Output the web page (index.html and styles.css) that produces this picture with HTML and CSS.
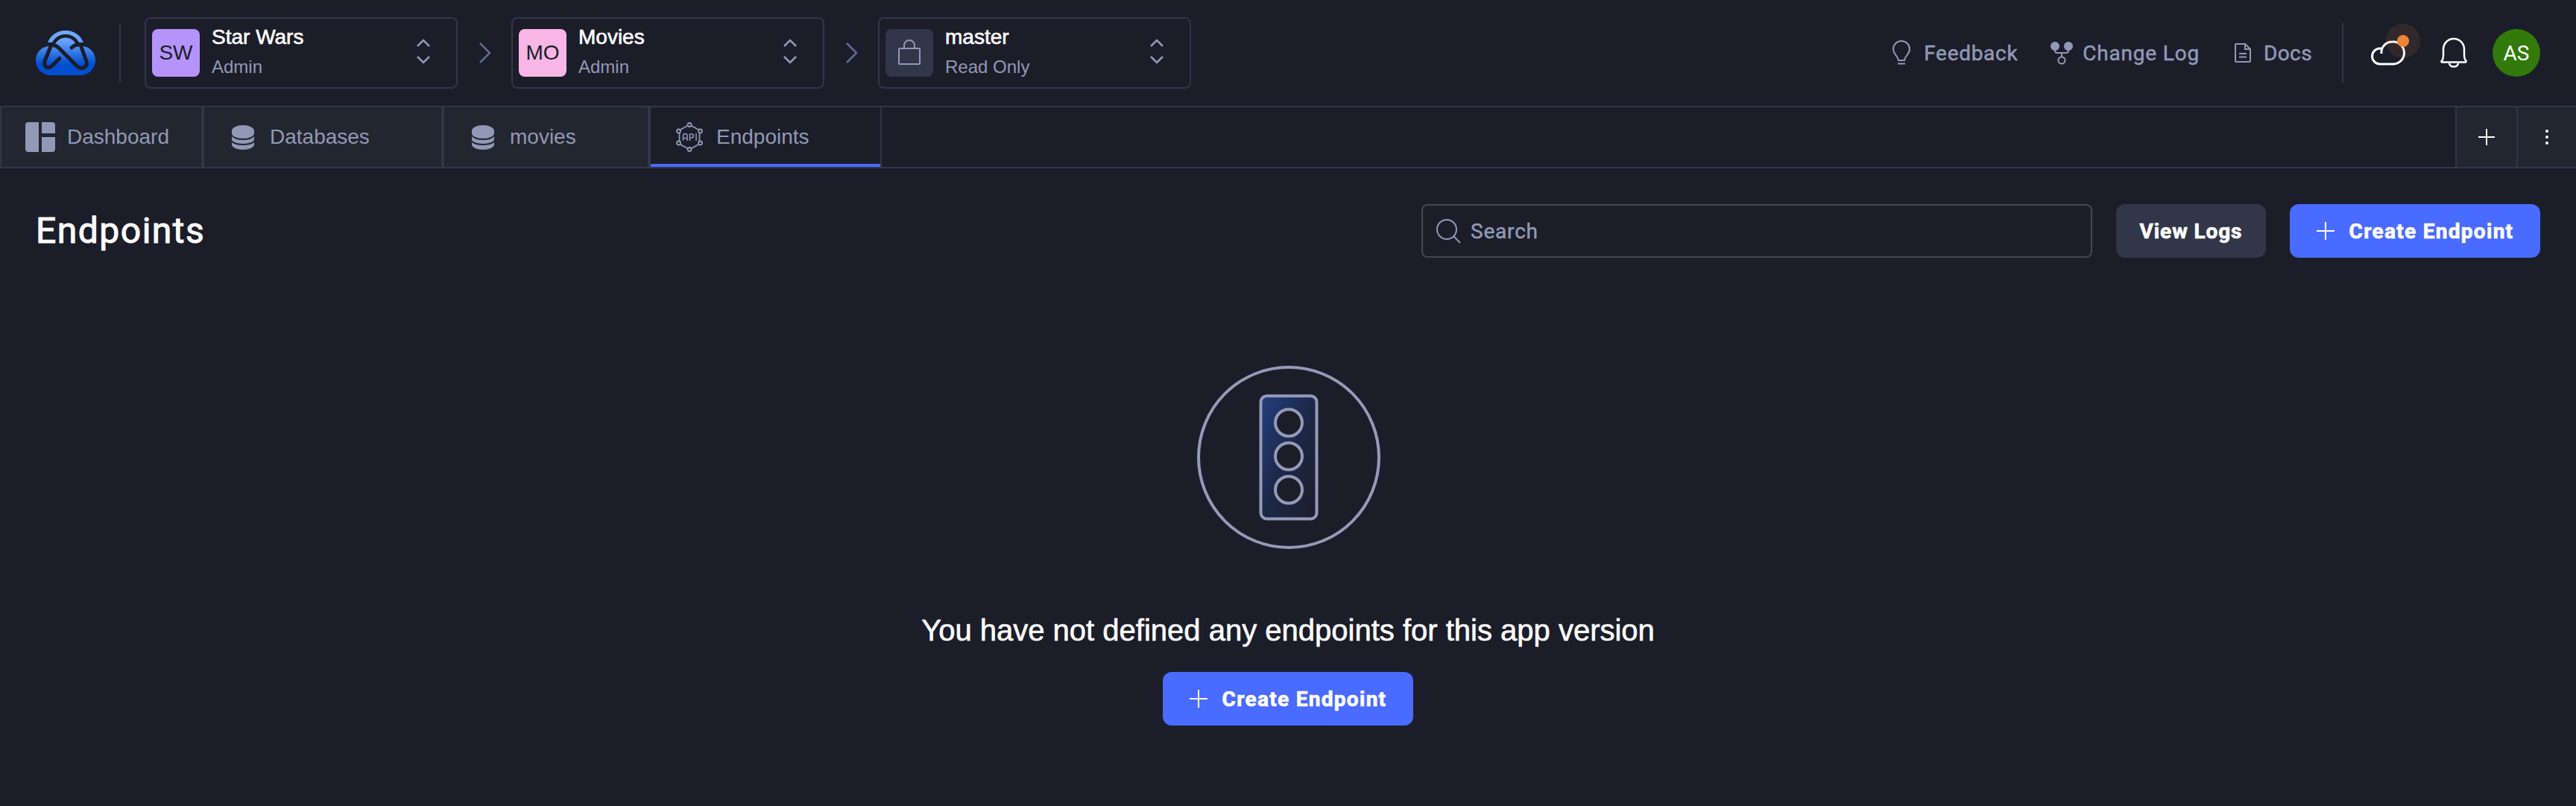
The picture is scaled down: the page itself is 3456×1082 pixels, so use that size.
FILE: index.html
```html
<!DOCTYPE html>
<html lang="en">
<head>
<meta charset="utf-8">
<title>Endpoints</title>
<link rel="stylesheet" href="styles.css">
</head>
<body>
<header class="topbar">
  <svg class="logo" viewBox="0 0 80 60">
    <defs><linearGradient id="cloud" gradientUnits="userSpaceOnUse" x1="0" y1="0" x2="0" y2="60"><stop offset="0" stop-color="#76abff"/><stop offset=".25" stop-color="#659ffb"/><stop offset=".75" stop-color="#014fd0"/><stop offset="1" stop-color="#014fd0"/></linearGradient></defs>
    <path fill="url(#cloud)" d="M16 16C20 6 29 0 40 0s20 6 24 16h-6C54 9 48 5 40 5s-14 4-18 11zM26 18C29 13 34 9.500 40 9.500S51 13 54 18L63 21C73 22 80 30 80 40 80 51 71 60 60 60H20C9 60 0 51 0 40 0 30 7 22 17 21Z"/>
    <path class="logo-cut" d="M32 37.500 21 48c-5 4-11 0-9-7L20.500 20M22 20c3-1 5 0 8 2.500l25 25c6 6 15 2 13-6L60 19M48 23q4-4 9-4"/>
  </svg>
  <span class="rule rule-left"></span>
  <div class="select">
    <span class="tile tile-purple">SW</span>
    <span class="select-text"><b>Star Wars</b><small>Admin</small></span>
    <svg class="updown" viewBox="0 0 20 34"><path d="m2 10 8-8 8 8M2 24l8 8 8-8"/></svg>
  </div>
  <svg class="crumb" viewBox="0 0 18 30"><path d="m2 2 13 13L2 28"/></svg>
  <div class="select">
    <span class="tile tile-pink">MO</span>
    <span class="select-text"><b>Movies</b><small>Admin</small></span>
    <svg class="updown" viewBox="0 0 20 34"><path d="m2 10 8-8 8 8M2 24l8 8 8-8"/></svg>
  </div>
  <svg class="crumb" viewBox="0 0 18 30"><path d="m2 2 13 13L2 28"/></svg>
  <div class="select">
    <span class="tile tile-lock"><svg class="lock" viewBox="0 0 32 36"><rect x="2" y="13" width="28" height="21" rx="1"/><path d="M9 13V9a7 7 0 0 1 14 0v4"/></svg></span>
    <span class="select-text"><b>master</b><small>Read Only</small></span>
    <svg class="updown" viewBox="0 0 20 34"><path d="m2 10 8-8 8 8M2 24l8 8 8-8"/></svg>
  </div>
  <nav class="links">
    <a class="link link-feedback"><svg class="i-bulb" viewBox="0 0 24 32"><path d="M8 26c-1-7-7-8-7-15a11 11 0 0 1 22 0c0 7-6 8-7 15zM7 30.500h10"/></svg>Feedback</a>
    <a class="link link-changelog"><svg class="i-fork" viewBox="0 0 30 31"><circle class="dot" cx="6" cy="6" r="6"/><circle class="dot" cx="24" cy="6" r="6"/><path d="M6 10v2q0 3 3 3h12q3 0 3-3v-2M15 15v5"/><circle cx="15" cy="25" r="4.600"/></svg>Change Log</a>
    <a class="link link-docs"><svg class="i-doc" viewBox="0 0 22 26"><path d="M2 1h12l7 7v16q0 1-1 1H2q-1 0-1-1V2q0-1 1-1zM14 1v7h7M6 14h10M6 18.500h10"/></svg>Docs</a>
  </nav>
  <span class="rule rule-right"></span>
  <div class="deploy"><svg class="i-cloud" viewBox="0 0 46 34"><path d="M14 18V14C16 6 22 2 29 2a15 15 0 0 1 1 30H12A10.500 10.500 0 0 1 12 11Q14 11 15 12"/></svg><span class="halo"></span></div>
  <svg class="i-bell" viewBox="0 0 36 40"><path d="M2 32.500q-1-1 0-2 2-2 2-8V15a14 14 0 0 1 28 0v7q0 6 2 8 1 1 0 2.500zM12 34a6 4.500 0 0 0 12 0"/></svg>
  <span class="user">AS</span>
</header>
<nav class="tabs">
  <div class="tab tab-dashboard"><svg class="i-dash" viewBox="0 0 40 40"><path d="M4 0h14v40H4q-4 0-4-4V4q0-4 4-4zM22 0h14q4 0 4 4v11H22zM22 20h18v16q0 4-4 4H22z"/></svg>Dashboard</div>
  <div class="tab tab-databases"><svg class="i-db" viewBox="0 0 30 33"><path d="M0 8a15 8 0 0 1 30 0v3a15 7 0 0 1-30 0zM0 15q4 5 15 5t15-5v4a15 6 0 0 1-30 0zM0 23q4 4 15 4t15-4v3a15 7 0 0 1-30 0z"/></svg>Databases</div>
  <div class="tab tab-movies"><svg class="i-db" viewBox="0 0 30 33"><path d="M0 8a15 8 0 0 1 30 0v3a15 7 0 0 1-30 0zM0 15q4 5 15 5t15-5v4a15 6 0 0 1-30 0zM0 23q4 4 15 4t15-4v3a15 7 0 0 1-30 0z"/></svg>movies</div>
  <div class="tab tab-active"><svg class="i-api" viewBox="0 0 36 40"><path d="m15 5-9 5M21 5l9 5M4.500 15v10M31.500 15v10M6 30l9 5M30 30l-9 5"/><circle cx="18" cy="3.500" r="2.500"/><circle cx="3.500" cy="12" r="2.500"/><circle cx="32.500" cy="12" r="2.500"/><circle cx="3.500" cy="28" r="2.500"/><circle cx="32.500" cy="28" r="2.500"/><circle cx="18" cy="36.500" r="2.500"/><path class="api-mark" d="M9.500 25v-6.500q0-3 2.750-3t2.750 3V25M9.500 21.500H15M18.500 25v-9h2.500q2.500 0 2.500 2.500T21 21h-2.500M27 15v10"/></svg>Endpoints</div>
  <div class="tab-tool tool-add"><svg class="i-add" viewBox="0 0 22 22"><path d="M11 0v22M0 11h22"/></svg></div>
  <div class="tab-tool tool-more"><svg class="i-more" viewBox="0 0 4 20"><circle cx="2" cy="2" r="2"/><circle cx="2" cy="10" r="2"/><circle cx="2" cy="18" r="2"/></svg></div>
</nav>
<main>
  <div class="page-head">
    <h1>Endpoints</h1>
    <label class="search"><svg class="i-search" viewBox="0 0 34 34"><circle cx="15" cy="15" r="13"/><path d="m24 24 9 9"/></svg>Search</label>
    <button class="btn btn-logs">View Logs</button>
    <button class="btn btn-create"><svg class="i-plus" viewBox="0 0 24 24"><path d="M12 0v24M0 12h24"/></svg>Create Endpoint</button>
  </div>
  <section class="empty">
    <svg class="signal" viewBox="0 0 246 246">
      <defs><linearGradient id="lamp" x1="0" y1="0" x2="1" y2="1"><stop offset="0" stop-color="#223f80"/><stop offset=".5" stop-color="#1d2847"/><stop offset="1" stop-color="#1b1d28"/></linearGradient></defs>
      <circle cx="123" cy="123" r="121"/>
      <rect x="85.500" y="40.500" width="75" height="165" rx="8" fill="url(#lamp)"/>
      <circle cx="123" cy="76.500" r="18"/><circle cx="123" cy="121.500" r="18"/><circle cx="123" cy="166.500" r="18"/>
    </svg>
    <p class="message">You have not defined any endpoints for this app version</p>
    <button class="btn btn-create"><svg class="i-plus" viewBox="0 0 24 24"><path d="M12 0v24M0 12h24"/></svg>Create Endpoint</button>
  </section>
</main>
</body>
</html>
```
FILE: styles.css
```css
* { box-sizing: border-box; }
body { margin: 0; background: #1b1d29; color: #fff; font: 28px "Liberation Sans", sans-serif; height: 1082px; overflow: hidden; }
svg { flex: none; fill: none; stroke: #9199b6; stroke-width: 2; overflow: visible; }

.topbar { height: 144px; border-bottom: 2px solid #313649; display: flex; align-items: center; padding: 0 48px; }
.logo { width: 80px; height: 60px; stroke: none; }
.logo-cut { stroke: #1b1d29; stroke-width: 5; stroke-linecap: round; stroke-linejoin: round; }
.rule { width: 2px; height: 80px; background: #313649; flex: none; }
.rule-left { margin: 0 32px; }
.select { width: 420px; height: 96px; border: 2px solid #313649; border-radius: 8px; display: flex; align-items: center; padding: 0 34px 0 8px; flex: none; }
.tile { width: 64px; height: 64px; border-radius: 8px; display: flex; align-items: center; justify-content: center; color: #1b1d29; }
.tile-purple { background: #b494fb; }
.tile-pink { background: #f7b6e5; }
.tile-lock { background: #313649; }
.lock { width: 32px; height: 36px; margin-top: -3px; }
.select-text { flex: 1; margin-left: 16px; display: flex; flex-direction: column; }
.select-text b { font-weight: 400; line-height: 40px; margin-top: -2px; -webkit-text-stroke: .6px #fff; }
.select-text small { font-size: 24px; line-height: 40px; color: #9199b6; }
.updown { width: 20px; height: 34px; stroke-width: 2.5; margin-top: -4px; }
.crumb { width: 18px; height: 30px; margin: 0 26px 0 28px; stroke: #616c93; stroke-width: 2.5; }

.links { margin-left: auto; display: flex; font-family: Roboto, sans-serif; color: #9199b6; }
.link { display: flex; align-items: center; white-space: nowrap; -webkit-text-stroke: .5px #9199b6; }
.link-feedback { letter-spacing: .7px; }
.link-changelog { letter-spacing: .8px; margin-left: 44px; }
.link-docs { letter-spacing: .4px; margin-left: 47px; }
.i-bulb { width: 24px; height: 32px; margin-right: 18px; }
.i-fork { width: 30px; height: 31px; margin-right: 13px; }
.dot { fill: #9199b6; stroke: none; }
.i-doc { width: 22px; height: 26px; margin-right: 17px; }
.rule-right { margin: 0 37px 0 40px; }
.deploy { position: relative; display: flex; }
.i-cloud { width: 46px; height: 34px; stroke: #fff; stroke-width: 3; }
.halo { position: absolute; left: 20px; top: -22px; width: 46px; height: 46px; border-radius: 50%; background: radial-gradient(circle, #ef8337 7.5px, #ef83371c 8.5px); }
.i-bell { width: 36px; height: 40px; margin: 0 34px 0 47px; stroke: #fff; stroke-width: 2.5; }
.user { width: 64px; height: 64px; border-radius: 50%; background: #317a0b; display: flex; align-items: center; justify-content: center; font-family: Roboto, sans-serif; }

.tabs { height: 82px; border-bottom: 2px solid #313649; display: flex; color: #9199b6; }
.tab { display: flex; align-items: center; background: #222630; border: 2px solid #313649; border-width: 0 2px; height: 80px; }
.tab-dashboard { width: 272px; padding-left: 32px; }
.tab-databases { width: 322px; padding-left: 37px; }
.tab-movies { width: 277px; padding-left: 37px; }
.tab-active { width: 312px; padding-left: 34px; background: linear-gradient(#496bff, #496bff) bottom / 100% 4px no-repeat #1b1d29; }
.i-dash { width: 40px; height: 40px; margin-right: 16px; fill: #9199b6; stroke: none; }
.i-db { width: 30px; height: 33px; margin-right: 21px; fill: #9199b6; stroke: none; }
.i-api { width: 36px; height: 40px; margin-right: 18px; stroke-width: 1.8; }
.api-mark { stroke-width: 1.5; }
.tab-tool { height: 80px; background: #222630; border-left: 2px solid #313649; display: flex; align-items: center; justify-content: center; }
.tool-add { width: 82px; margin-left: auto; }
.tool-more { width: 80px; }
.i-add { width: 22px; height: 22px; stroke: #fff; }
.i-more { width: 4px; height: 20px; fill: #fff; stroke: none; }

.page-head { padding: 48px 48px 0; display: flex; align-items: center; }
h1 { margin: 0 auto 0 0; font: 400 48px/72px Roboto, sans-serif; letter-spacing: 1.5px; -webkit-text-stroke: 1px #fff; }
.search { width: 900px; height: 72px; border: 2px solid #47474e; border-radius: 8px; display: flex; align-items: center; padding-left: 17px; color: #9199b6; font-family: Roboto, sans-serif; letter-spacing: .8px; -webkit-text-stroke: .5px #9199b6; }
.i-search { width: 34px; height: 34px; margin-right: 13px; }
.btn { height: 72px; border: 0; border-radius: 12px; color: #fff; font: 700 28px Roboto, sans-serif; display: flex; align-items: center; justify-content: center; padding: 0; white-space: nowrap; -webkit-text-stroke: .7px #fff; }
.btn-logs { width: 201px; margin: 0 32px; background: #313649; letter-spacing: .9px; }
.btn-create { width: 336px; background: #496bff; letter-spacing: 1.3px; }
.i-plus { width: 24px; height: 24px; margin-right: 20px; stroke: #fff; }

.empty { display: flex; flex-direction: column; align-items: center; padding-top: 145px; }
.signal { width: 246px; height: 246px; margin-left: 1px; stroke: #959ab8; stroke-width: 4; fill: #1b1d28; }
.message { margin: 85px 0 32px; font-size: 40px; line-height: 48px; -webkit-text-stroke: .6px #fff; }
```
